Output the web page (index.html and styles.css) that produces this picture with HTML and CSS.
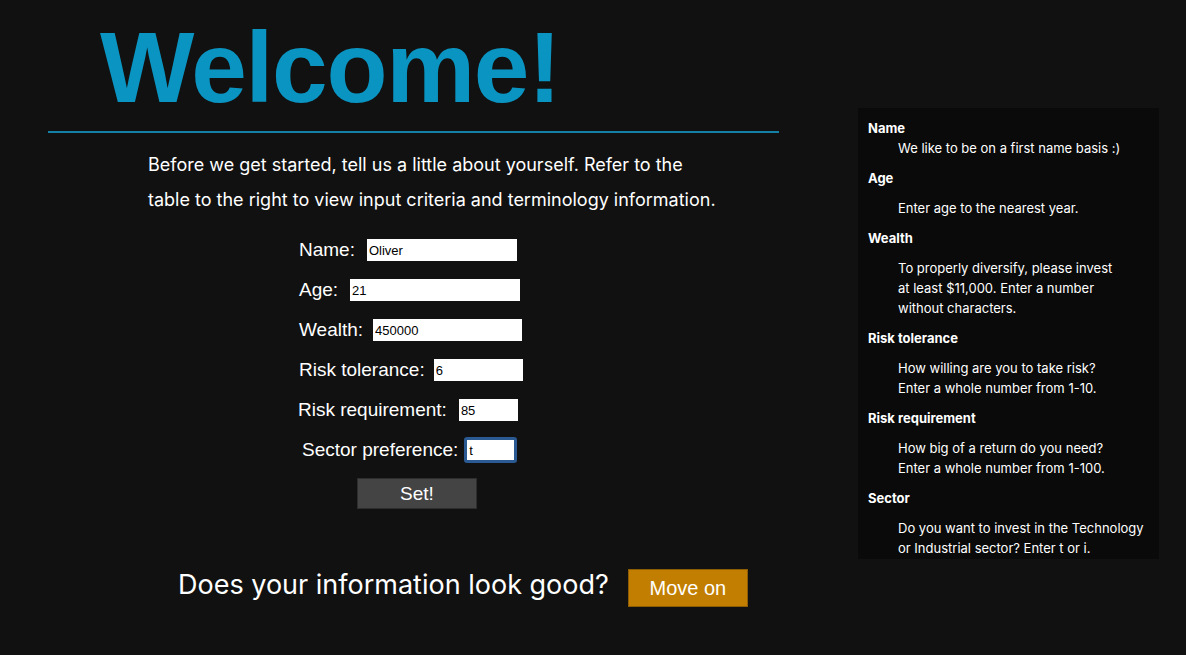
FILE: index.html
```html
<!DOCTYPE html>
<html>
<head>
<meta charset="utf-8">
<title>Welcome</title>
<link rel="stylesheet" href="styles.css">
</head>
<body>
<div class="page">
  <main class="main">
    <h1 class="title">Welcome!</h1>
    <p class="intro">Before we get started, tell us a little about yourself. Refer to the table to the right to view input criteria and terminology information.</p>
    <form class="form">
      <div class="row"><label class="label">Name:</label><input class="field w-name" type="text" value="Oliver"></div>
      <div class="row"><label class="label">Age:</label><input class="field w-age" type="text" value="21"></div>
      <div class="row row-wealth"><label class="label">Wealth:</label><input class="field w-wealth" type="text" value="450000"></div>
      <div class="row row-tol"><label class="label">Risk tolerance:</label><input class="field w-tol" type="text" value="6"></div>
      <div class="row row-req"><label class="label">Risk requirement:</label><input class="field w-req" type="text" value="85"></div>
      <div class="row row-sector"><label class="label">Sector preference:</label><input class="field w-sector focused" type="text" value="t"></div>
      <button class="set-btn" type="button">Set!</button>
    </form>
    <div class="confirm">
      <span class="confirm-text">Does your information look good?</span>
      <button class="move-btn" type="button">Move on</button>
    </div>
  </main>
  <aside class="panel">
    <dl class="terms">
      <dt class="term first">Name</dt>
      <dd class="desc">We like to be on a first name basis :)</dd>
      <dt class="term">Age</dt>
      <dd class="desc">Enter age to the nearest year.</dd>
      <dt class="term">Wealth</dt>
      <dd class="desc">To properly diversify, please invest<br>at least $11,000. Enter a number<br>without characters.</dd>
      <dt class="term">Risk tolerance</dt>
      <dd class="desc">How willing are you to take risk?<br>Enter a whole number from 1-10.</dd>
      <dt class="term">Risk requirement</dt>
      <dd class="desc">How big of a return do you need?<br>Enter a whole number from 1-100.</dd>
      <dt class="term">Sector</dt>
      <dd class="desc">Do you want to invest in the Technology<br>or Industrial sector? Enter t or i.</dd>
    </dl>
  </aside>
</div>
</body>
</html>
```

FILE: styles.css
```css
html, body {
  margin: 0;
  padding: 0;
  background: #111111;
  color: #ffffff;
}
body {
  font-family: "Liberation Sans", Arial, sans-serif;
  width: 1186px;
  height: 655px;
  overflow: hidden;
}
.page {
  display: flex;
  align-items: flex-start;
}
.main {
  margin-left: 48px;
  width: 731px;
  display: flex;
  flex-direction: column;
}
.title {
  margin: 17px 0 0 0;
  padding: 0 0 14px 52px;
  font-family: "Liberation Sans", Arial, sans-serif;
  font-weight: bold;
  font-size: 100px;
  line-height: 100px;
  letter-spacing: -1.3px;
  color: #0a94c2;
  border-bottom: 2px solid #1480a6;
}
.intro {
  margin: 14px 0 0 0;
  padding-left: 100px;
  width: 575px;
  font-family: Inter, "Noto Sans", sans-serif;
  font-size: 18px;
  line-height: 35px;
  color: #ffffff;
}
.form {
  margin-top: 13px;
  display: flex;
  flex-direction: column;
  align-items: flex-start;
  padding-left: 251px;
}
.row {
  height: 40px;
  display: flex;
  align-items: center;
  gap: 12px;
}
.label {
  font-size: 19px;
  color: #ffffff;
}
.field {
  box-sizing: border-box;
  height: 22px;
  border: none;
  padding: 0 2px;
  margin: 0;
  background: #ffffff;
  color: #000000;
  font-family: "Liberation Sans", Arial, sans-serif;
  font-size: 13px;
  outline: none;
}
.w-name { width: 150px; }
.w-age { width: 170px; }
.w-wealth { width: 149px; }
.w-tol { width: 89px; }
.w-req { width: 59px; }
.w-sector { width: 53px; }
.row-wealth { gap: 10px; }
.row-tol { gap: 9px; }
.row-req { margin-left: -1px; }
.row-sector {
  gap: 6px;
  margin-left: 3px;
}
.focused {
  height: 26px;
  border: 3px solid #2b5a92;
  border-radius: 3px;
}
.set-btn {
  margin: 8px 0 0 58px;
  width: 120px;
  height: 31px;
  background: #444444;
  border: 1px solid #2e2e2e;
  color: #ffffff;
  font-family: "Liberation Sans", Arial, sans-serif;
  font-size: 19px;
  padding: 0;
}
.confirm {
  margin-top: 59px;
  padding-left: 130px;
  display: flex;
  align-items: center;
  gap: 19px;
}
.confirm-text {
  margin-bottom: 7px;
  font-family: Inter, "Noto Sans", sans-serif;
  font-size: 27px;
  color: #ffffff;
}
.move-btn {
  width: 120px;
  height: 38px;
  background: #c17e00;
  border: 1px solid #8c5d05;
  color: #ffffff;
  font-family: "Liberation Sans", Arial, sans-serif;
  font-size: 20px;
  padding: 0;
}
.panel {
  margin-left: 79px;
  margin-top: 108px;
  width: 301px;
  height: 451px;
  box-sizing: border-box;
  padding: 10px 10px 0 10px;
  background: #0a0a0a;
  overflow: hidden;
}
.terms {
  margin: 0;
  font-family: Inter, "Noto Sans", sans-serif;
  font-size: 13px;
  line-height: 20px;
  color: #ffffff;
}
.term {
  font-weight: bold;
  margin: 0 0 10px 0;
}
.term.first {
  margin-bottom: 0;
}
.desc {
  margin: 0 0 10px 30px;
}
```
